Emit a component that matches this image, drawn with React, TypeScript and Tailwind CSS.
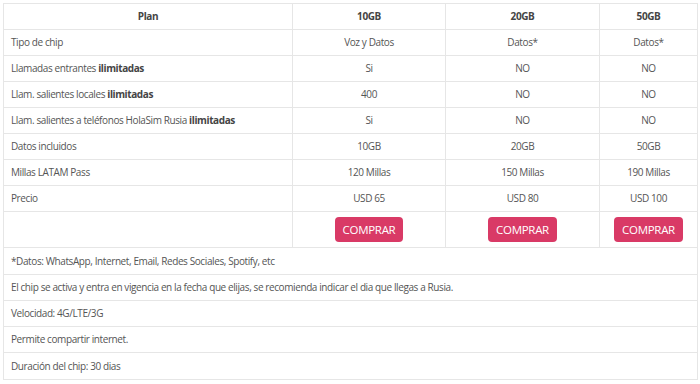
import React from "react";

const plans = ["10GB", "20GB", "50GB"];

const rows: { label: React.ReactNode; values: string[] }[] = [
  { label: "Tipo de chip", values: ["Voz y Datos", "Datos*", "Datos*"] },
  {
    label: (
      <>
        Llamadas entrantes <b className="font-bold text-[#444]">ilimitadas</b>
      </>
    ),
    values: ["Si", "NO", "NO"],
  },
  {
    label: (
      <>
        Llam. salientes locales <b className="font-bold text-[#444]">ilimitadas</b>
      </>
    ),
    values: ["400", "NO", "NO"],
  },
  {
    label: (
      <>
        Llam. salientes a teléfonos HolaSim Rusia{" "}
        <b className="font-bold text-[#444]">ilimitadas</b>
      </>
    ),
    values: ["Si", "NO", "NO"],
  },
  { label: "Datos incluidos", values: ["10GB", "20GB", "50GB"] },
  { label: "Millas LATAM Pass", values: ["120 Millas", "150 Millas", "190 Millas"] },
  { label: "Precio", values: ["USD 65", "USD 80", "USD 100"] },
];

// alto de cada fila de notas
const notes = [
  { text: "*Datos: WhatsApp, Internet, Email, Redes Sociales, Spotify, etc", h: "h-[27px]" },
  {
    text: "El chip se activa y entra en vigencia en la fecha que elijas, se recomienda indicar el dia que llegas a Rusia.",
    h: "h-[26px]",
  },
  { text: "Velocidad: 4G/LTE/3G", h: "h-[26px]" },
  { text: "Permite compartir internet.", h: "h-[26px]" },
  { text: "Duración del chip: 30 dias", h: "h-[27px]" },
];

const cell = "border border-[#e6e6e6] h-[26px] px-[7px] py-0 align-middle";

export default function App() {
  return (
    <div className="w-[700px] h-[384px] bg-white pt-[3px] pl-[3px] font-['Open_Sans',sans-serif] text-[10px] tracking-[-0.4px] text-[#555]">
      <table className="w-[694px] table-fixed border-collapse">
        <colgroup>
          <col className="w-[289px]" />
          <col className="w-[153px]" />
          <col className="w-[154px]" />
          <col className="w-[98px]" />
        </colgroup>
        <thead>
          <tr>
            <th className={`${cell} text-center font-bold text-[#444]`}>Plan</th>
            {plans.map((p) => (
              <th key={p} className={`${cell} text-center font-bold text-[#444]`}>
                {p}
              </th>
            ))}
          </tr>
        </thead>
        <tbody>
          {rows.map((r, i) => (
            <tr key={i}>
              <td className={`${cell} text-left`}>{r.label}</td>
              {r.values.map((v, j) => (
                <td key={j} className={`${cell} text-center`}>
                  {v}
                </td>
              ))}
            </tr>
          ))}
          <tr>
            <td className="border border-[#e6e6e6] h-[36px]" />
            {plans.map((p) => (
              <td key={p} className="border border-[#e6e6e6] h-[36px] text-center align-middle">
                <button className="h-[25px] px-[8px] rounded-[4px] bg-[#d93a66] text-white text-[11.5px] tracking-[-0.3px] leading-none">
                  COMPRAR
                </button>
              </td>
            ))}
          </tr>
          {notes.map((n, i) => (
            <tr key={i}>
              <td colSpan={4} className={`border border-[#e6e6e6] ${n.h} px-[7px] py-0 align-middle text-left`}>
                {n.text}
              </td>
            </tr>
          ))}
        </tbody>
      </table>
    </div>
  );
}
